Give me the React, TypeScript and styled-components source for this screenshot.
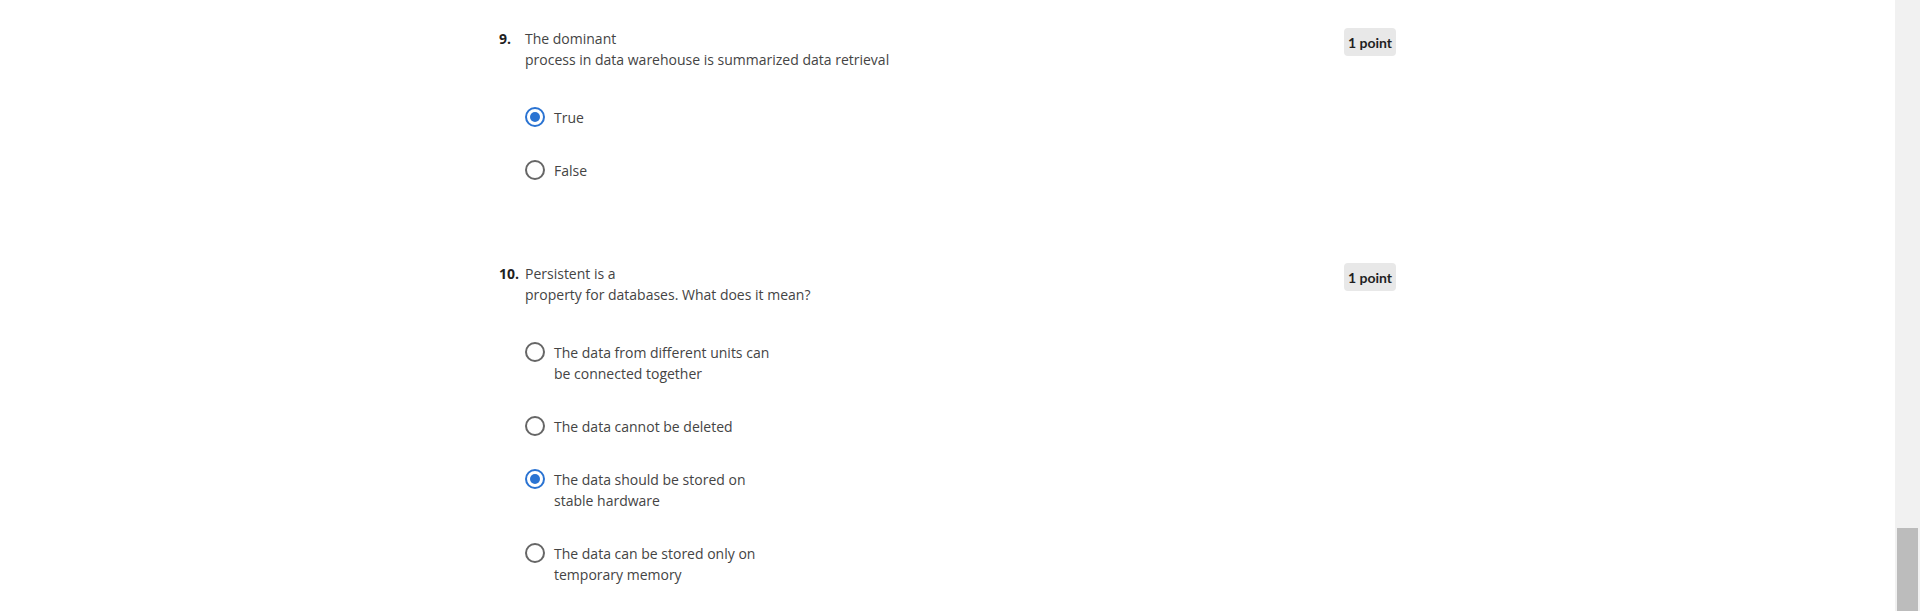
import React from "react";
import styled, { createGlobalStyle } from "styled-components";

const Global = createGlobalStyle`
  html, body { margin: 0; padding: 0; background: #ffffff; }
  body { font-family: "Open Sans", "Liberation Sans", sans-serif; overflow: hidden; }
`;

const Page = styled.div`
  display: flex;
  width: 1920px;
  height: 611px;
  overflow: hidden;
`;

const Main = styled.main`
  flex: 1;
  display: flex;
  justify-content: center;
`;

const Quiz = styled.div`
  width: 897px;
  display: flex;
  flex-direction: column;
  gap: 82px;
  padding-top: 28px;
`;

const Question = styled.section`
  display: flex;
  flex-direction: column;
  gap: 37px;
`;

const Header = styled.div`
  display: flex;
  align-items: flex-start;
`;

const Number = styled.span`
  width: 26px;
  flex: none;
  font-size: 14px;
  line-height: 21px;
  font-weight: 700;
  color: #1f1f1f;
`;

const Prompt = styled.div`
  flex: 1;
  font-size: 14px;
  line-height: 21px;
  color: #444444;
`;

const Badge = styled.span`
  flex: none;
  box-sizing: border-box;
  height: 28px;
  line-height: 26px;
  padding: 2px 4px 0;
  border-radius: 4px;
  background: #e8e8e8;
  font-family: Lato, "Open Sans", sans-serif;
  font-size: 14px;
  font-weight: 700;
  color: #1f1f1f;
`;

const Options = styled.div`
  display: flex;
  flex-direction: column;
  gap: 32px;
  margin-left: 26px;
`;

const Option = styled.label`
  display: flex;
  align-items: flex-start;
  gap: 9px;
`;

const Radio = styled.span<{ $checked?: boolean }>`
  flex: none;
  box-sizing: border-box;
  width: 20px;
  height: 20px;
  border-radius: 50%;
  border: 2px solid ${(p) => (p.$checked ? "#2a73d2" : "#666666")};
  display: flex;
  align-items: center;
  justify-content: center;
  &::after {
    content: "";
    display: ${(p) => (p.$checked ? "block" : "none")};
    width: 10px;
    height: 10px;
    border-radius: 50%;
    background: #2a73d2;
  }
`;

const Label = styled.span`
  font-size: 14px;
  line-height: 21px;
  color: #444444;
`;

const Scrollbar = styled.div`
  width: 25px;
  flex: none;
  background: #f1f1f1;
  display: flex;
  flex-direction: column;
  justify-content: flex-end;
`;

const Thumb = styled.div`
  width: 21px;
  height: 83px;
  margin-left: 2px;
  background: #bcbcbc;
`;

type Q = {
  n: string;
  prompt: string[];
  options: { lines: string[]; checked?: boolean }[];
};

const questions: Q[] = [
  {
    n: "9.",
    prompt: ["The dominant", "process in data warehouse is summarized data retrieval"],
    options: [{ lines: ["True"], checked: true }, { lines: ["False"] }],
  },
  {
    n: "10.",
    prompt: ["Persistent is a", "property for databases. What does it mean?"],
    options: [
      { lines: ["The data from different units can", "be connected together"] },
      { lines: ["The data cannot be deleted"] },
      { lines: ["The data should be stored on", "stable hardware"], checked: true },
      { lines: ["The data can be stored only on", "temporary memory"] },
    ],
  },
];

const Lines = ({ lines }: { lines: string[] }) => (
  <>
    {lines.map((l, i) => (
      <React.Fragment key={i}>
        {i > 0 && <br />}
        {l}
      </React.Fragment>
    ))}
  </>
);

export default function App() {
  return (
    <Page>
      <Global />
      <Main>
        <Quiz>
          {questions.map((q) => (
            <Question key={q.n}>
              <Header>
                <Number>{q.n}</Number>
                <Prompt>
                  <Lines lines={q.prompt} />
                </Prompt>
                <Badge>1 point</Badge>
              </Header>
              <Options>
                {q.options.map((o, i) => (
                  <Option key={i}>
                    <Radio $checked={o.checked} />
                    <Label>
                      <Lines lines={o.lines} />
                    </Label>
                  </Option>
                ))}
              </Options>
            </Question>
          ))}
        </Quiz>
      </Main>
      <Scrollbar>
        <Thumb />
      </Scrollbar>
    </Page>
  );
}
